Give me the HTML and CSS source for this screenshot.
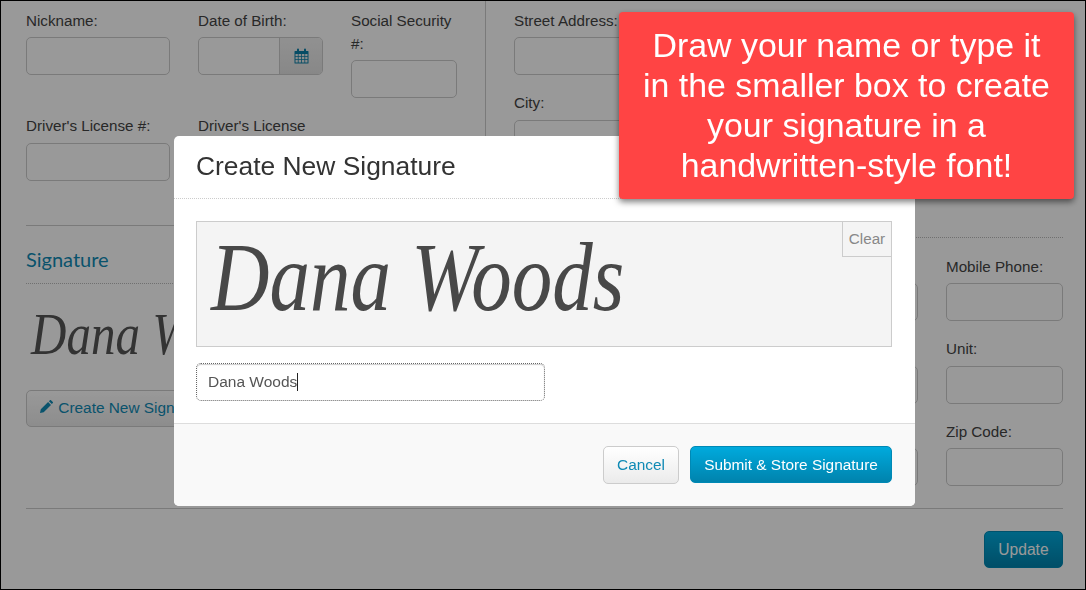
FILE: index.html
```html
<!DOCTYPE html>
<html lang="en">
<head>
<meta charset="utf-8">
<title>Create New Signature</title>
<link rel="stylesheet" href="styles.css">
</head>
<body>
<div class="page">
  <div class="columns">
    <section class="col-left">
      <div class="grid-personal">
        <div class="field"><label>Nickname:</label><div class="input"></div></div>
        <div class="field"><label>Date of Birth:</label>
          <div class="input date">
            <span class="date-btn">
              <svg width="15" height="16" viewBox="0 0 15 16"><path class="cal" d="M1 3h2V1.500a1 1 0 0 1 2 0V3h5V1.500a1 1 0 0 1 2 0V3h2a.5.5 0 0 1 .5.5v11.500a.5.5 0 0 1-.5.5H1a.5.5 0 0 1-.5-.5V3.500A.5.5 0 0 1 1 3zM1.500 6v2h2.300V6zm3.100 0v2h2.500V6zm3.300 0v2h2.500V6zm3.300 0v2h2.300V6zM1.500 8.800v2.200h2.300V8.800zm3.100 0v2.200h2.500V8.800zm3.300 0v2.200h2.500V8.800zm3.300 0v2.200h2.300V8.800zM1.500 11.800v2.700h2.300v-2.700zm3.100 0v2.700h2.500v-2.700zm3.300 0v2.700h2.500v-2.700zm3.300 0v2.700h2.300v-2.700z"/></svg>
            </span>
          </div>
        </div>
        <div class="field"><label>Social Security #:</label><div class="input"></div></div>
        <div class="field"><label>Driver's License #:</label><div class="input"></div></div>
        <div class="field"><label>Driver's License</label><div class="input"></div></div>
      </div>
      <hr class="rule rule-sig">
      <h3 class="section-title">Signature</h3>
      <p class="sig-preview"><span>Dana Woods</span></p>
      <button class="btn btn-light btn-create">
        <svg class="pencil-icon" width="13" height="13" viewBox="0 0 13 13"><path class="pencil" d="M0 13l.8-3.700 7.300-7.300 2.900 2.900-7.300 7.300zM8.900 1.200l1-1a.8.8 0 0 1 1.100 0l1.800 1.800a.8.8 0 0 1 0 1.100l-1 1z"/></svg>
        Create New Signature
      </button>
    </section>
    <section class="col-right">
      <div class="field"><label>Street Address:</label><div class="input"></div></div>
      <div class="field"><label>City:</label><div class="input"></div></div>
      <div class="section-rule"></div>
      <div class="grid-contact">
        <div class="field"><label></label><div class="input"></div></div>
        <div class="field"><label></label><div class="input"></div></div>
        <div class="field"><label>Mobile Phone:</label><div class="input"></div></div>
        <div class="field"><label></label><div class="input"></div></div>
        <div class="field"><label></label><div class="input"></div></div>
        <div class="field"><label>Unit:</label><div class="input"></div></div>
        <div class="field"><label></label><div class="input"></div></div>
        <div class="field"><label></label><div class="input"></div></div>
        <div class="field"><label>Zip Code:</label><div class="input"></div></div>
      </div>
    </section>
  </div>
  <hr class="rule rule-end">
  <div class="actions"><button class="btn btn-primary btn-update">Update</button></div>
</div>

<div class="overlay"></div>

<div class="modal">
  <header class="modal-head"><h2>Create New Signature</h2></header>
  <div class="modal-body">
    <div class="sig-box">
      <span class="sig-text">Dana Woods</span>
      <button class="clear">Clear</button>
    </div>
    <div class="name-input">Dana Woods<span class="caret"></span></div>
  </div>
  <footer class="modal-foot">
    <button class="btn btn-light btn-cancel">Cancel</button>
    <button class="btn btn-primary btn-submit">Submit &amp; Store Signature</button>
  </footer>
</div>

<aside class="callout">Draw your name or type it in the smaller box to create your signature in a handwritten-style font!</aside>
</body>
</html>
```
FILE: styles.css
```css
* { box-sizing: border-box; }
html, body { margin: 0; padding: 0; height: 100%; overflow: hidden; }
body {
  width: 1086px;
  height: 590px;
  background: #fff;
  font-family: "Liberation Sans", Arial, sans-serif;
  font-size: 15.2px;
  color: #444;
}
.page {
  width: 1086px;
  height: 590px;
  padding: 0 22px 0 25px;
  border: 1px solid #000;
}
.columns { display: flex; align-items: flex-start; height: 507px; }
.col-left {
  width: 460px;
  height: 490px;
  padding: 7.600px 28px 0 0;
  border-right: 1px solid #ccc;
}
.col-right { flex: 1; padding: 7.600px 0 0 28px; }
.grid-personal {
  display: grid;
  grid-template-columns: 144px 125px 106px;
  column-gap: 28px;
  row-gap: 16.300px;
  align-items: start;
}
.col-right > .field { margin-bottom: 16.300px; }
.field label { display: block; min-height: 23px; line-height: 23px; margin-bottom: 5.500px; color: #444; }
.input {
  height: 38px;
  border: 1px solid #ccc;
  border-radius: 5px;
  background: #fff;
}
.date { display: flex; justify-content: flex-end; overflow: hidden; }
.date-btn {
  width: 43px;
  display: flex;
  align-items: center;
  justify-content: center;
  border-left: 1px solid #ccc;
  background: linear-gradient(#f2f2f2, #e2e2e2);
}
.cal { fill: #0b7fa8; fill-rule: evenodd; }
.rule { border: 0; border-top: 1px solid #ccc; margin: 0; }
.rule-sig { margin: 44.100px 0 0; }
.section-title {
  margin: 22px 0 0;
  height: 36px;
  padding-bottom: 10px;
  font-family: Lato, sans-serif;
  font-size: 20px;
  font-weight: 400;
  line-height: 23px;
  color: #0f8ab5;
  border-bottom: 1px dotted #bbb;
}
.section-rule { margin: 46.100px 0 16.600px; height: 34px; border-bottom: 1px dotted #bbb; }
.sig-preview {
  margin: 0;
  height: 106px;
  padding-top: 23px;
  font-family: "Liberation Serif", serif;
  font-style: italic;
  font-size: 49px;
  line-height: 56px;
  color: #555;
  white-space: nowrap;
}
.sig-preview span { display: inline-block; transform: translateX(5px) scale(1, 1.2); transform-origin: left center; }
.btn {
  font-family: "Liberation Sans", Arial, sans-serif;
  font-size: 15.400px;
  border-radius: 5px;
  cursor: pointer;
}
.btn-light {
  border: 1px solid #ccc;
  background: linear-gradient(#fff, #ebebeb);
  color: #0f8ab5;
}
.btn-primary {
  border: 1px solid #0089b5;
  background: linear-gradient(#00aadd, #0083ad);
  color: #fff;
}
.btn-create { height: 37px; width: 190px; padding: 0 0 0 13px; text-align: left; white-space: nowrap; }
.pencil { fill: #0f8ab5; }
.pencil-icon { margin-right: 1px; }
.grid-contact {
  display: grid;
  grid-template-columns: 188px 188px 117px;
  column-gap: 28px;
  row-gap: 16px;
}
.rule-end { margin: 0; width: 1037px; }
.actions { display: flex; justify-content: flex-end; padding-top: 22px; }
.btn-update { width: 79px; height: 37px; font-size: 15.600px; padding: 0; }

.overlay { position: fixed; inset: 1px; background: rgba(0, 0, 0, .4); }

.modal {
  position: fixed;
  left: 174px;
  top: 136px;
  width: 741px;
  height: 370px;
  display: flex;
  flex-direction: column;
  background: #fff;
  border-radius: 5px;
  overflow: hidden;
}
.modal-head { height: 63px; padding: 0 22px 2px; border-bottom: 1px dotted #ccc; display: flex; align-items: center; }
.modal-head h2 { margin: 0; font-size: 26.400px; font-weight: 400; color: #333; }
.modal-body { flex: 1; padding: 22px 23px 0 22px; }
.sig-box {
  position: relative;
  height: 126px;
  background: #f4f4f4;
  border: 1px solid #ccc;
  overflow: hidden;
}
.sig-text {
  display: inline-block;
  margin: 11px 0 0 14px;
  font-family: "Liberation Serif", serif;
  font-style: italic;
  font-size: 81px;
  line-height: 90px;
  color: #484848;
  white-space: nowrap;
  transform: scale(1, 1.2);
  transform-origin: left center;
}
.clear {
  position: absolute;
  top: 0;
  right: 0;
  width: 49px;
  height: 35px;
  border: 0;
  border-left: 1px solid #ccc;
  border-bottom: 1px solid #ccc;
  background: #f4f4f4;
  color: #888;
  font-family: "Liberation Sans", Arial, sans-serif;
  font-size: 15.200px;
  padding: 0 0 2px;
}
.name-input {
  margin-top: 16px;
  width: 349px;
  height: 38px;
  padding: 0 11px;
  line-height: 36px;
  font-size: 15.500px;
  color: #555;
  border: 1px dotted #666;
  border-radius: 5px;
  box-shadow: inset 0 1px 1px rgba(0, 0, 0, .2);
}
.caret { display: inline-block; width: 1px; height: 18px; background: #222; vertical-align: -4px; }
.modal-foot {
  height: 83px;
  padding: 22px 23px 0 0;
  display: flex;
  justify-content: flex-end;
  align-items: flex-start;
  gap: 11px;
  background: #f9f9f9;
  border-top: 1px solid #ddd;
}
.btn-cancel { width: 76px; height: 38px; padding: 0; }
.btn-submit { width: 202px; height: 37px; padding: 0; }

.callout {
  position: fixed;
  left: 619px;
  top: 12px;
  width: 455px;
  height: 187px;
  padding: 13px 19px 0;
  background: #f44;
  color: #fff;
  border-radius: 4px;
  font-size: 33.900px;
  line-height: 40px;
  text-align: center;
  box-shadow: 0 3px 6px rgba(0, 0, 0, .5);
}
```
